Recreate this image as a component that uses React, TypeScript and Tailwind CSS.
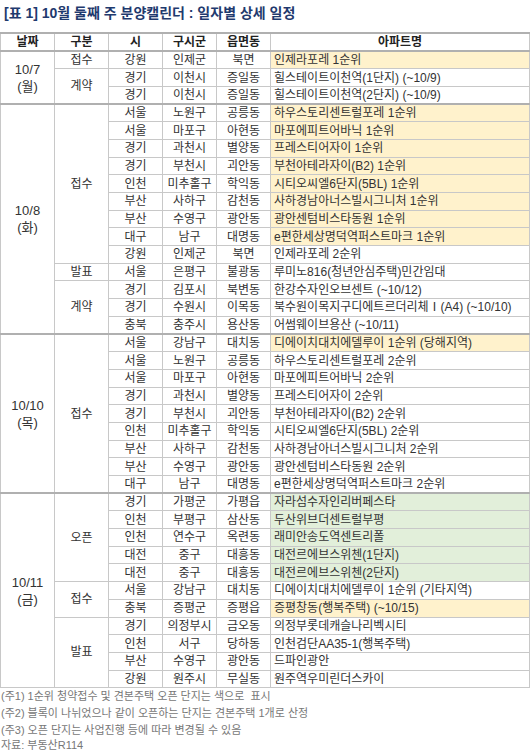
import React from "react";

type Row = [string, string, string, string, ("y" | "g" | "")?];
type Cat = { name: string; rows: Row[] };
type Group = { date: string; day: string; cats: Cat[] };

const data: Group[] = [
  {
    date: "10/7",
    day: "(월)",
    cats: [
      { name: "접수", rows: [["강원", "인제군", "북면", "인제라포레 1순위", "y"]] },
      {
        name: "계약",
        rows: [
          ["경기", "이천시", "증일동", "힐스테이트이천역(1단지) (~10/9)"],
          ["경기", "이천시", "증일동", "힐스테이트이천역(2단지) (~10/9)"],
        ],
      },
    ],
  },
  {
    date: "10/8",
    day: "(화)",
    cats: [
      {
        name: "접수",
        rows: [
          ["서울", "노원구", "공릉동", "하우스토리센트럴포레 1순위", "y"],
          ["서울", "마포구", "아현동", "마포에피트어바닉 1순위", "y"],
          ["경기", "과천시", "별양동", "프레스티어자이 1순위", "y"],
          ["경기", "부천시", "괴안동", "부천아테라자이(B2) 1순위", "y"],
          ["인천", "미추홀구", "학익동", "시티오씨엘6단지(5BL) 1순위", "y"],
          ["부산", "사하구", "감천동", "사하경남아너스빌시그니처 1순위", "y"],
          ["부산", "수영구", "광안동", "광안센텀비스타동원 1순위", "y"],
          ["대구", "남구", "대명동", "e편한세상명덕역퍼스트마크 1순위", "y"],
          ["강원", "인제군", "북면", "인제라포레 2순위"],
        ],
      },
      { name: "발표", rows: [["서울", "은평구", "불광동", "루미노816(청년안심주택)민간임대"]] },
      {
        name: "계약",
        rows: [
          ["경기", "김포시", "북변동", "한강수자인오브센트 (~10/12)"],
          ["경기", "수원시", "이목동", "북수원이목지구디에트르더리체Ⅰ(A4) (~10/10)"],
          ["충북", "충주시", "용산동", "어썸웨이브용산 (~10/11)"],
        ],
      },
    ],
  },
  {
    date: "10/10",
    day: "(목)",
    cats: [
      {
        name: "접수",
        rows: [
          ["서울", "강남구", "대치동", "디에이치대치에델루이 1순위 (당해지역)", "y"],
          ["서울", "노원구", "공릉동", "하우스토리센트럴포레 2순위"],
          ["서울", "마포구", "아현동", "마포에피트어바닉 2순위"],
          ["경기", "과천시", "별양동", "프레스티어자이 2순위"],
          ["경기", "부천시", "괴안동", "부천아테라자이(B2) 2순위"],
          ["인천", "미추홀구", "학익동", "시티오씨엘6단지(5BL) 2순위"],
          ["부산", "사하구", "감천동", "사하경남아너스빌시그니처 2순위"],
          ["부산", "수영구", "광안동", "광안센텀비스타동원 2순위"],
          ["대구", "남구", "대명동", "e편한세상명덕역퍼스트마크 2순위"],
        ],
      },
    ],
  },
  {
    date: "10/11",
    day: "(금)",
    cats: [
      {
        name: "오픈",
        rows: [
          ["경기", "가평군", "가평읍", "자라섬수자인리버페스타", "g"],
          ["인천", "부평구", "삼산동", "두산위브더센트럴부평", "g"],
          ["인천", "연수구", "옥련동", "래미안송도역센트리폴", "g"],
          ["대전", "중구", "대흥동", "대전르에브스위첸(1단지)", "g"],
          ["대전", "중구", "대흥동", "대전르에브스위첸(2단지)", "g"],
        ],
      },
      {
        name: "접수",
        rows: [
          ["서울", "강남구", "대치동", "디에이치대치에델루이 1순위 (기타지역)"],
          ["충북", "증평군", "증평읍", "증평창동(행복주택) (~10/15)", "y"],
        ],
      },
      {
        name: "발표",
        rows: [
          ["경기", "의정부시", "금오동", "의정부롯데캐슬나리벡시티"],
          ["인천", "서구", "당하동", "인천검단AA35-1(행복주택)"],
          ["부산", "수영구", "광안동", "드파인광안"],
          ["강원", "원주시", "무실동", "원주역우미린더스카이"],
        ],
      },
    ],
  },
];

const cell = "border border-[#c8c8c8] text-center align-middle p-0 whitespace-nowrap";
const head = cell + " border-t-2 border-b-2 border-t-[#b0b0b0] border-b-[#b0b0b0]";

export default function App() {
  return (
    <div
      className="w-[530px] h-[752px] bg-white overflow-hidden text-[#333]"
      style={{ fontFamily: '"Liberation Sans", "Noto Sans CJK KR", sans-serif' }}
    >
      <div className="h-[30px] pl-[4px] pt-[4px] text-[14px] font-bold text-[#1f3a6e] leading-[18px]">
        [표 1] 10월 둘째 주 분양캘린더 : 일자별 상세 일정
      </div>
      <table className="w-[530px] border-collapse table-fixed text-[12px] leading-[14px] mt-[2px]">
        <colgroup>
          <col className="w-[54px]" />
          <col className="w-[54px]" />
          <col className="w-[54px]" />
          <col className="w-[54px]" />
          <col className="w-[54px]" />
          <col />
        </colgroup>
        <thead>
          <tr className="h-[18px] font-bold text-[#222]">
            <th className={head}>날짜</th>
            <th className={head}>구분</th>
            <th className={head}>시</th>
            <th className={head}>구시군</th>
            <th className={head}>읍면동</th>
            <th className={head}>아파트명</th>
          </tr>
        </thead>
        <tbody>
          {data.map((g, gi) => {
            const total = g.cats.reduce((s, c) => s + c.rows.length, 0);
            const out: React.ReactNode[] = [];
            g.cats.forEach((c, ci) => {
              c.rows.forEach((r, ri) => {
                const first = ci === 0 && ri === 0;
                const topThick = first && gi > 0 ? " border-t-2 border-t-[#b0b0b0]" : "";
                const bg = r[4] === "y" ? " bg-[#fff2cc]" : r[4] === "g" ? " bg-[#e2efda]" : "";
                out.push(
                  <tr key={`${gi}-${ci}-${ri}`} className="h-[17.7px]">
                    {first && (
                      <td rowSpan={total} className={cell + topThick + " text-[13px] leading-[17px]"}>
                        <div>{g.date}</div>
                        <div>{g.day}</div>
                      </td>
                    )}
                    {ri === 0 && (
                      <td rowSpan={c.rows.length} className={cell + topThick}>
                        {c.name}
                      </td>
                    )}
                    <td className={cell + topThick}>{r[0]}</td>
                    <td className={cell + topThick}>{r[1]}</td>
                    <td className={cell + topThick}>{r[2]}</td>
                    <td className={cell + topThick + bg + " text-left pl-[3px]"}>{r[3]}</td>
                  </tr>
                );
              });
            });
            return out;
          })}
        </tbody>
      </table>
      <div className="text-[11px] leading-[17px] text-[#777] pl-[1px]">
        <div>(주1) 1순위 청약접수 및 견본주택 오픈 단지는 색으로&nbsp; 표시</div>
        <div>(주2) 블록이 나뉘었으나 같이 오픈하는 단지는 견본주택 1개로 산정</div>
        <div>(주3) 오픈 단지는 사업진행 등에 따라 변경될 수 있음</div>
        <div className="leading-[12px]">자료: 부동산R114</div>
      </div>
    </div>
  );
}
